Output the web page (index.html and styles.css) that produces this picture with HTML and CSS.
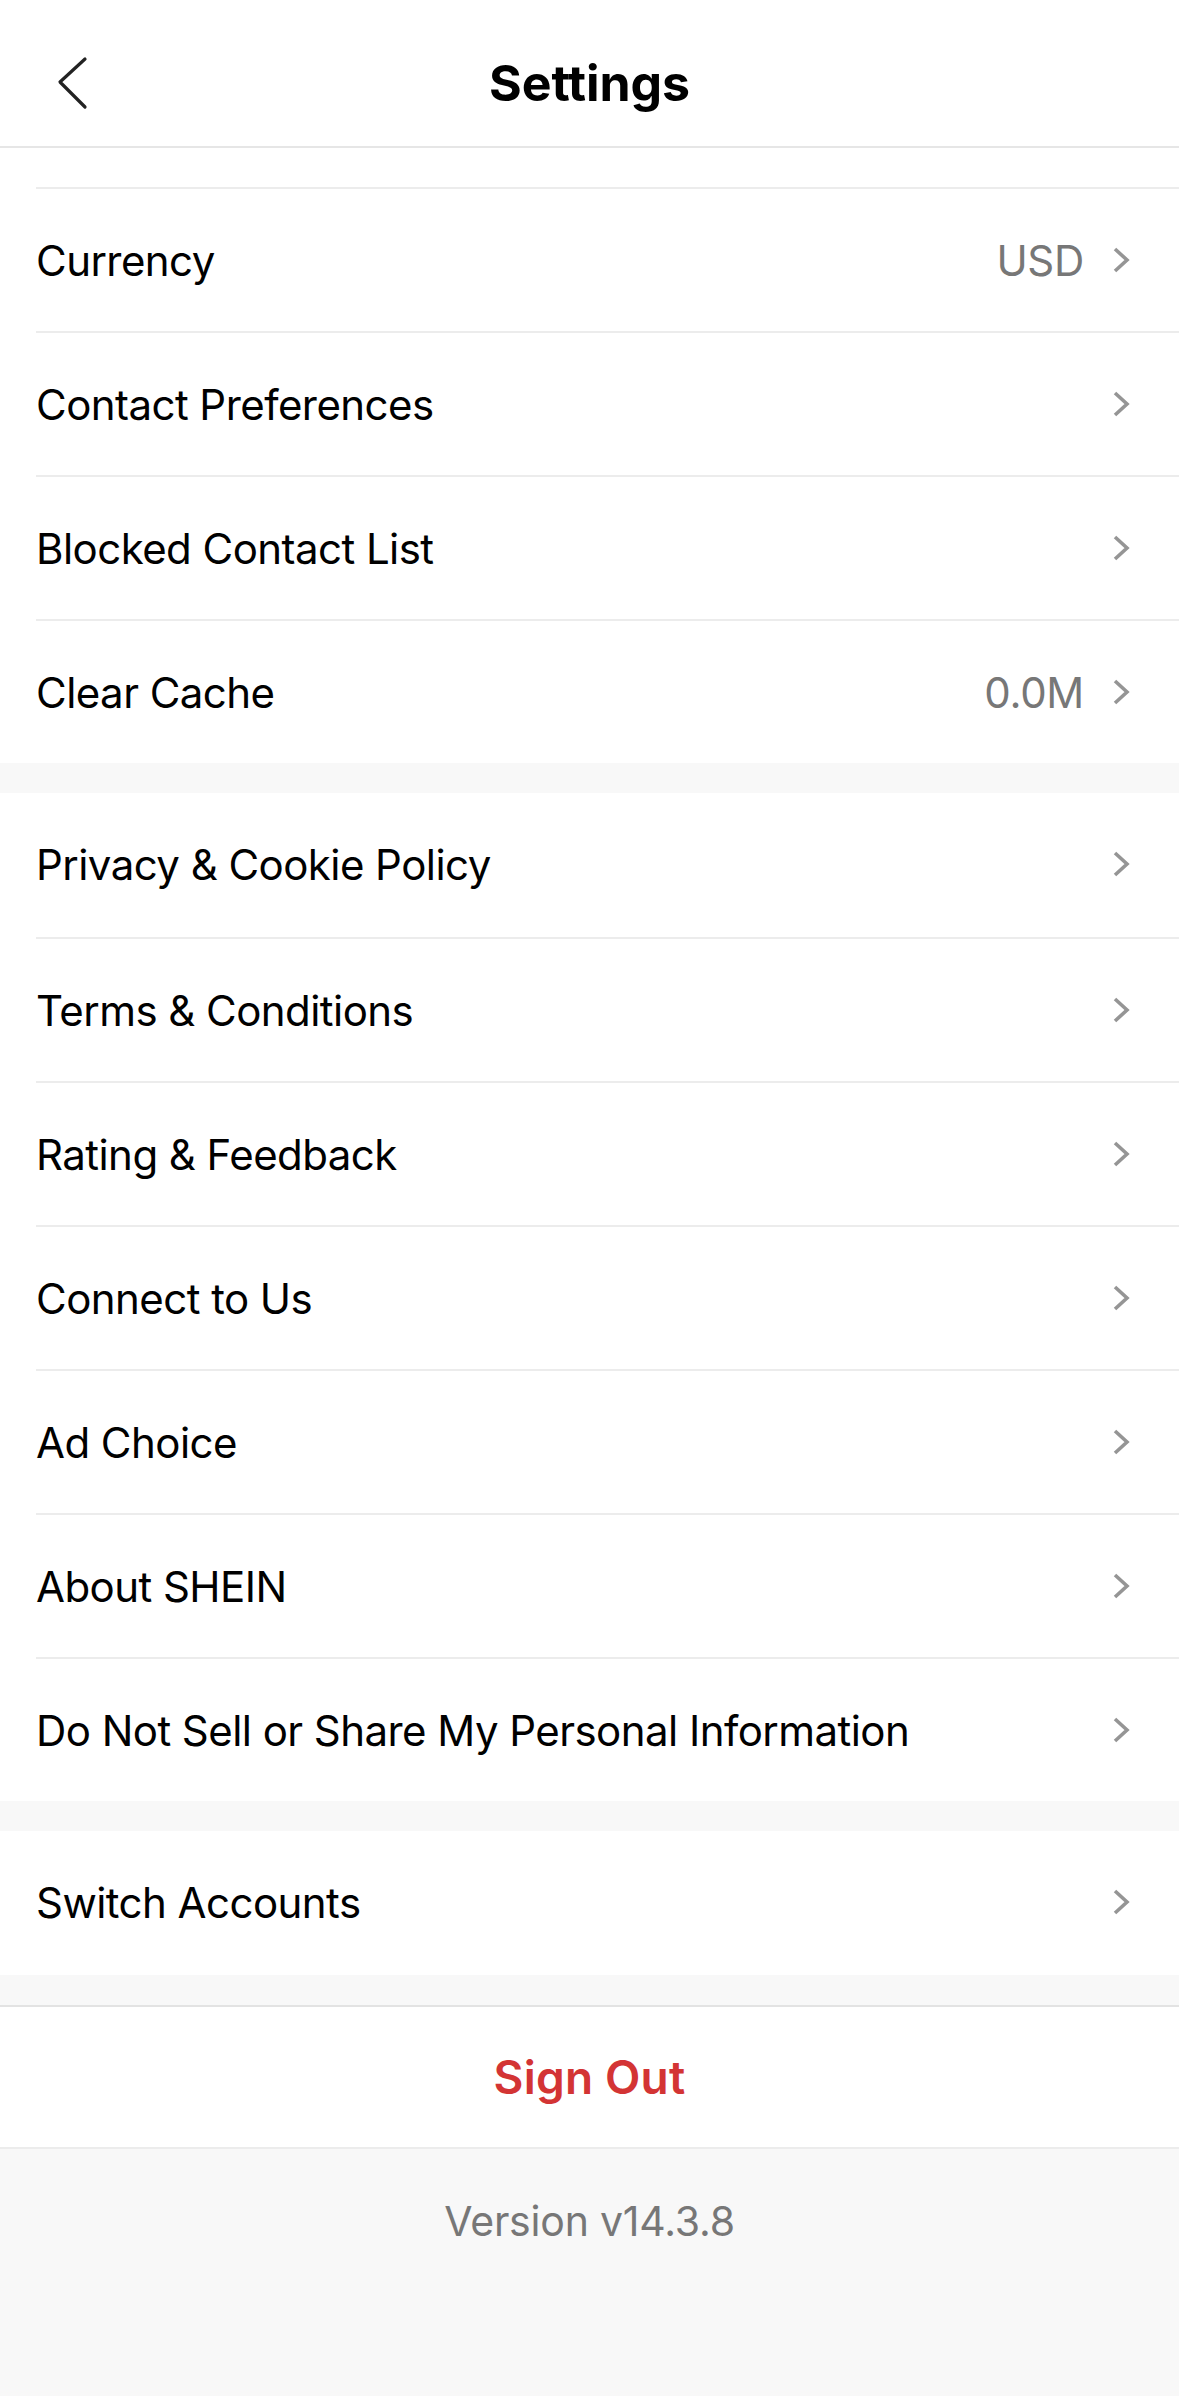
FILE: index.html
```html
<!DOCTYPE html>
<html lang="en">
<head>
<meta charset="utf-8">
<title>Settings</title>
<link rel="stylesheet" href="styles.css">
</head>
<body>
<header class="topbar">
  <div class="topbar-left">
    <svg class="back" width="40" height="56" viewBox="0 0 40 56"><path d="M31 4 L6 27 L31 52" fill="none" stroke="#222" stroke-width="3.2" stroke-linecap="round" stroke-linejoin="round"/></svg>
  </div>
  <h1 class="title">Settings</h1>
  <div class="topbar-right"></div>
</header>

<section class="group">
  <div class="row row-partial"></div>
  <div class="row"><span class="label">Currency</span><span class="value">USD</span><svg class="chev" viewBox="0 0 18 28"><path d="M3 3 L15 14 L3 25" fill="none" stroke="#959595" stroke-width="3.6"/></svg></div>
  <div class="row"><span class="label">Contact Preferences</span><svg class="chev" viewBox="0 0 18 28"><path d="M3 3 L15 14 L3 25" fill="none" stroke="#959595" stroke-width="3.6"/></svg></div>
  <div class="row"><span class="label">Blocked Contact List</span><svg class="chev" viewBox="0 0 18 28"><path d="M3 3 L15 14 L3 25" fill="none" stroke="#959595" stroke-width="3.6"/></svg></div>
  <div class="row"><span class="label">Clear Cache</span><span class="value">0.0M</span><svg class="chev" viewBox="0 0 18 28"><path d="M3 3 L15 14 L3 25" fill="none" stroke="#959595" stroke-width="3.6"/></svg></div>
</section>

<section class="group">
  <div class="row"><span class="label">Privacy &amp; Cookie Policy</span><svg class="chev" viewBox="0 0 18 28"><path d="M3 3 L15 14 L3 25" fill="none" stroke="#959595" stroke-width="3.6"/></svg></div>
  <div class="row"><span class="label">Terms &amp; Conditions</span><svg class="chev" viewBox="0 0 18 28"><path d="M3 3 L15 14 L3 25" fill="none" stroke="#959595" stroke-width="3.6"/></svg></div>
  <div class="row"><span class="label">Rating &amp; Feedback</span><svg class="chev" viewBox="0 0 18 28"><path d="M3 3 L15 14 L3 25" fill="none" stroke="#959595" stroke-width="3.6"/></svg></div>
  <div class="row"><span class="label">Connect to Us</span><svg class="chev" viewBox="0 0 18 28"><path d="M3 3 L15 14 L3 25" fill="none" stroke="#959595" stroke-width="3.6"/></svg></div>
  <div class="row"><span class="label">Ad Choice</span><svg class="chev" viewBox="0 0 18 28"><path d="M3 3 L15 14 L3 25" fill="none" stroke="#959595" stroke-width="3.6"/></svg></div>
  <div class="row"><span class="label">About SHEIN</span><svg class="chev" viewBox="0 0 18 28"><path d="M3 3 L15 14 L3 25" fill="none" stroke="#959595" stroke-width="3.6"/></svg></div>
  <div class="row"><span class="label">Do Not Sell or Share My Personal Information</span><svg class="chev" viewBox="0 0 18 28"><path d="M3 3 L15 14 L3 25" fill="none" stroke="#959595" stroke-width="3.6"/></svg></div>
</section>

<section class="group">
  <div class="row"><span class="label">Switch Accounts</span><svg class="chev" viewBox="0 0 18 28"><path d="M3 3 L15 14 L3 25" fill="none" stroke="#959595" stroke-width="3.6"/></svg></div>
</section>

<div class="signout">Sign Out</div>

<footer class="version">Version v14.3.8</footer>
</body>
</html>
```

FILE: styles.css
```css
html, body {
  margin: 0;
  padding: 0;
}
body {
  background: #f8f8f8;
  font-family: Inter, "Liberation Sans", Roboto, sans-serif;
  color: #000;
  width: 1179px;
  min-height: 2396px;
}
.topbar {
  background: #fff;
  border-bottom: 2px solid #e6e6e6;
  display: grid;
  grid-template-columns: 1fr auto 1fr;
  align-items: center;
  padding-top: 20px;
  box-sizing: border-box;
  height: 148px;
}
.topbar-left {
  padding-left: 54px;
  display: flex;
  align-items: center;
}
.back {
  display: block;
}
.title {
  margin: 0;
  font-size: 50px;
  font-weight: 700;
  letter-spacing: -0.1px;
  color: #000;
}
.group {
  background: #fff;
  padding-left: 36px;
  margin-bottom: 30px;
}
.row {
  height: 144px;
  box-sizing: border-box;
  display: flex;
  align-items: center;
  border-top: 2px solid #ececec;
  padding-right: 49px;
}
.row:first-child {
  border-top: none;
  padding-bottom: 2px;
}
.row.row-partial {
  height: 39px;
  padding-bottom: 0;
}
.label {
  flex: 1;
  font-size: 42px;
  color: #000;
  letter-spacing: -0.55px;
}
.value {
  font-size: 42px;
  color: #777;
  letter-spacing: -0.3px;
  margin-right: 28px;
}
.chev {
  width: 18px;
  height: 28px;
  flex: none;
}
.signout {
  background: #fff;
  border-top: 2px solid #e3e3e3;
  border-bottom: 2px solid #ececec;
  height: 144px;
  box-sizing: border-box;
  display: flex;
  align-items: center;
  justify-content: center;
  font-size: 46px;
  font-weight: 600;
  letter-spacing: 0.2px;
  color: #d33434;
}
.version {
  text-align: center;
  font-size: 41px;
  color: #777;
  letter-spacing: -0.2px;
  padding-top: 46px;
  line-height: 52px;
}
```
